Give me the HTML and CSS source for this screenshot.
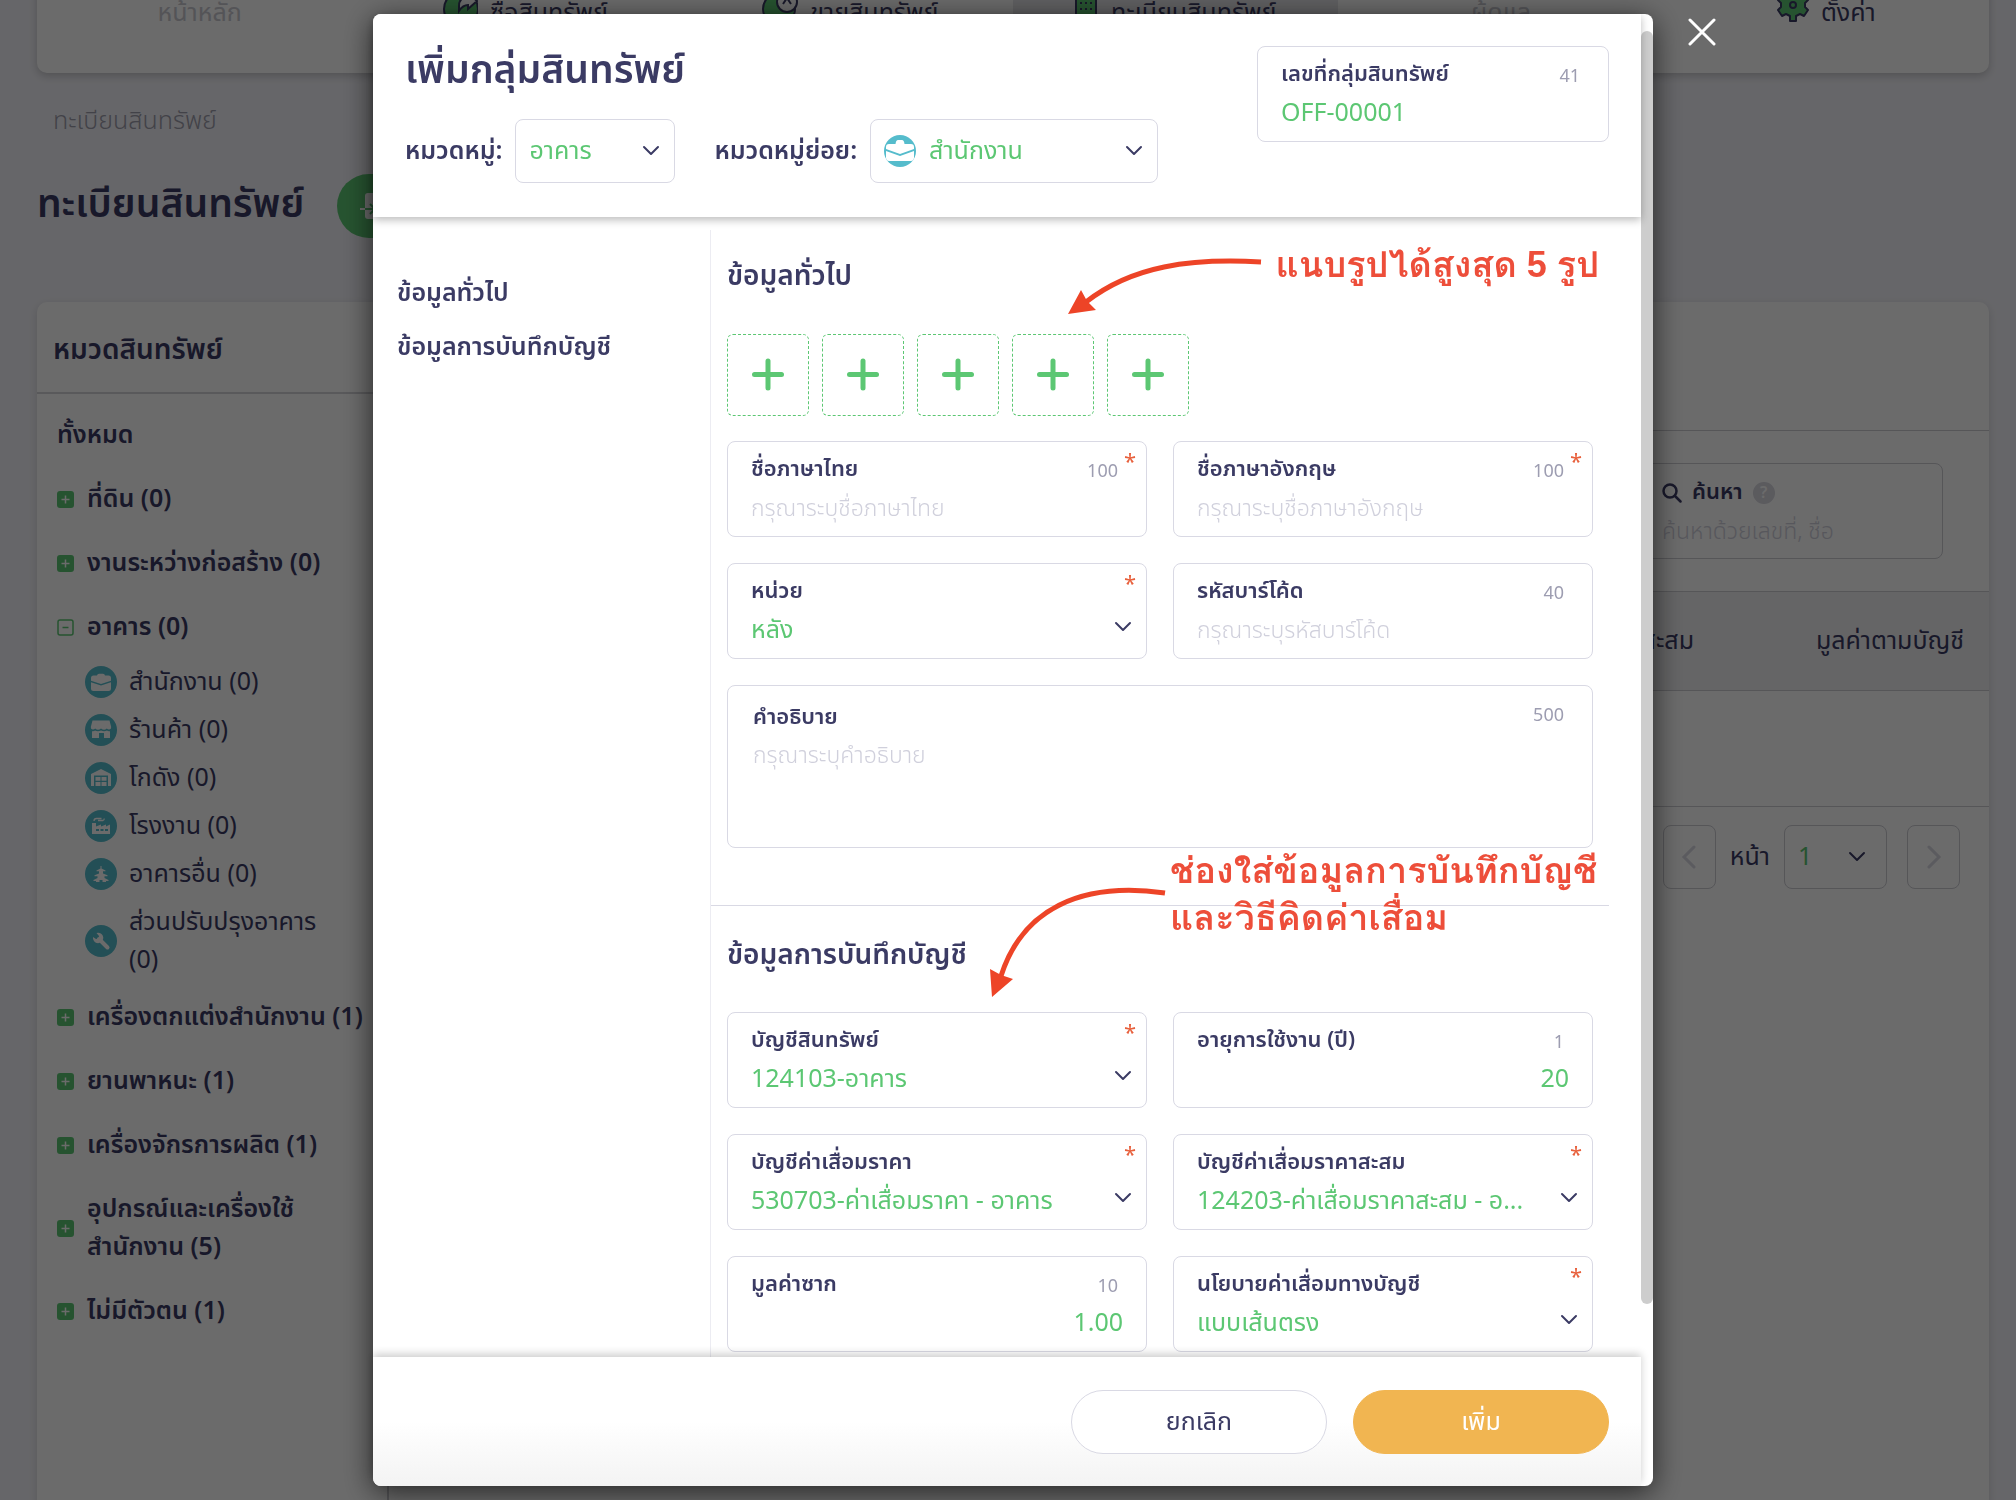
FILE: index.html
```html
<!DOCTYPE html>
<html lang="th">
<head>
<meta charset="utf-8">
<title>เพิ่มกลุ่มสินทรัพย์</title>
<link rel="stylesheet" href="styles.css">
</head>
<body>
<svg class="defs" aria-hidden="true">
  <symbol id="chev" viewBox="0 0 18 18"><path d="M2 5l7 7 7-7" fill="none" stroke="currentColor" stroke-width="2" stroke-linecap="round" stroke-linejoin="round"/></symbol>
  <symbol id="expand" viewBox="0 0 17 17"><rect width="17" height="17" rx="3" fill="#5cc773"/><path d="M8.500 4.500v8M4.500 8.500h8" stroke="#fff" stroke-width="1.500"/></symbol>
  <symbol id="collapse" viewBox="0 0 17 17"><rect x="1" y="1" width="15" height="15" rx="2" fill="none" stroke="#5cc773" stroke-width="1.500"/><path d="M5.500 8.500h6" stroke="#5cc773" stroke-width="1.500"/></symbol>
  <symbol id="office" viewBox="0 0 32 32"><circle cx="16" cy="16" r="16" fill="#55bccc"/><path d="M6 12q0-2.500 2.500-2.500h3.500q.3-1.800 2-1.800h4q1.700 0 2 1.800h3.500q2.500 0 2.500 2.500v2.700l-10 3.300-10-3.300zM6 16.300l10 3.300 10-3.300v6.200q0 2.500-2.500 2.500h-15q-2.500 0-2.500-2.500z" fill="#fff"/></symbol>
  <symbol id="office-line" viewBox="0 0 32 32"><circle cx="16" cy="16" r="16" fill="#55bccc"/><path d="M2 12q0-3 3-3h6.500q.5-4 2.500-4h4q2 0 2.500 4H27q3 0 3 3v2l-14 5-14-5zM2 16l14 5 14-5v7q-.5 3-3 3H5q-2.500 0-3-3z" fill="#fff"/></symbol>
  <symbol id="shop" viewBox="0 0 32 32"><circle cx="16" cy="16" r="16" fill="#55bccc"/><path d="M7.500 6.500h17l1.700 6.500q.2 2-1.800 2.500-1.400.3-2.600-1-1.300 1.300-2.800 1.300T16 14.500q-1.500 1.300-3 1.300t-2.800-1.300q-1.200 1.300-2.600 1-2-.5-1.800-2.500zM7 17.200q2 .3 3-.6 2.800 1.400 6 0 3.200 1.400 6 0 1 .9 3 .6v6.800h-6v-5h-5v5H7z" fill="#fff"/></symbol>
  <symbol id="warehouse" viewBox="0 0 32 32"><circle cx="16" cy="16" r="16" fill="#55bccc"/><path d="M6 12l10-5 10 5v12h-3V13.500H9V24H6z" fill="#fff"/><path d="M10.500 15h5v3.700h-5zM16.500 15h5v3.700h-5zM10.500 20h5v4h-5zM16.500 20h5v4h-5z" fill="#fff"/></symbol>
  <symbol id="factory" viewBox="0 0 32 32"><circle cx="16" cy="16" r="16" fill="#55bccc"/><path d="M7 13h4v3.500l5-2v2l5-2v2l4-2V24H7z" fill="#fff"/><path d="M9 11q0-2.500 2.500-2.500h5M13 10.500h5q1.500-.5 1-2" fill="none" stroke="#fff" stroke-width="1.300"/><path d="M11 19h3v2h-3zM15.500 19h3v2h-3zM20 19h3v2h-3z" fill="#55bccc"/></symbol>
  <symbol id="pagoda" viewBox="0 0 32 32"><circle cx="16" cy="16" r="16" fill="#55bccc"/><path d="M15.500 8h1v2.500l4 2v.8h-2.500v2.200l4.500 1.800v.9h-3v1.800l4 2v1H21v1h-3.500v-2h-3v2H11v-1H8.500v-1l4-2v-1.800h-3v-.9l4.500-1.800v-2.200h-2.500v-.8l4-2z" fill="#fff"/></symbol>
  <symbol id="wrench" viewBox="0 0 32 32"><circle cx="16" cy="16" r="16" fill="#55bccc"/><path d="M14 14l8.500 8.500" stroke="#fff" stroke-width="4" stroke-linecap="round"/><path d="M11.500 8a5.200 5.200 0 1 1-3.500 4l3 2 2.500-.5.500-2.500z" fill="#fff"/></symbol>
</svg>

<div class="page">
  <nav class="topnav">
    <a class="tab faded" href="#">หน้าหลัก</a>
    <a class="tab" href="#"><svg width="36" height="36" viewBox="0 0 36 36"><circle cx="19" cy="19" r="17" fill="#5cc773" stroke="#3b3b64" stroke-width="2"/><path d="M17 16q0-9 9-9V3l9 8-9 8v-4q-5 0-9 6z" fill="#fff" stroke="#3b3b64" stroke-width="2"/></svg>ซื้อสินทรัพย์</a>
    <a class="tab" href="#"><svg width="36" height="36" viewBox="0 0 36 36"><circle cx="17" cy="19" r="16" fill="#5cc773" stroke="#3b3b64" stroke-width="2"/><circle cx="25" cy="12" r="10" fill="#fff" stroke="#3b3b64" stroke-width="2"/><path d="M21 14l4-6 4 6" fill="none" stroke="#3b3b64" stroke-width="2"/></svg>ขายสินทรัพย์</a>
    <a class="tab current" href="#"><svg width="24" height="36" viewBox="0 0 24 36"><rect x="1" y="1" width="20" height="34" fill="#5cc773" stroke="#3b3b64" stroke-width="2"/><path d="M6 0v36M11 0v36M16 0v36" stroke="#3b3b64" stroke-width="2" stroke-dasharray="2 4"/></svg>ทะเบียนสินทรัพย์</a>
    <a class="tab faded" href="#">ผู้ดูแล</a>
    <a class="tab" href="#"><svg width="32" height="36" viewBox="0 0 32 36"><g fill="#5cc773" stroke="#3b3b64" stroke-width="2" stroke-linejoin="round"><path d="M13 0h6v5l4 2 4-3 4 6-3 3v4l3 3-4 6-4-2-4 2v5h-6v-5l-4-2-4 2-4-6 3-3v-4l-3-3 4-6 4 3 4-2z"/><circle cx="16" cy="15" r="3"/></g></svg>ตั้งค่า</a>
  </nav>
  <p class="crumb">ทะเบียนสินทรัพย์</p>
  <div class="heading">
    <h1>ทะเบียนสินทรัพย์</h1>
    <button class="import" type="button"><svg width="34" height="30" viewBox="0 0 34 30"><rect x="6" y="2" width="22" height="26" rx="3" fill="#fff"/><path d="M1 18h14M11 13l5 5-5 5" fill="none" stroke="#5cc773" stroke-width="2"/><path d="M1 18h5" stroke="#fff" stroke-width="2"/></svg>นำเข้า</button>
  </div>
  <div class="board">
    <aside class="cats">
      <h2>หมวดสินทรัพย์</h2>
      <ul class="tree">
        <li class="all">ทั้งหมด</li>
        <li><svg class="sq"><use href="#expand"/></svg>ที่ดิน (0)</li>
        <li><svg class="sq"><use href="#expand"/></svg>งานระหว่างก่อสร้าง (0)</li>
        <li><svg class="sq"><use href="#collapse"/></svg>อาคาร (0)</li>
      </ul>
      <ul class="sub">
        <li><svg><use href="#office"/></svg>สำนักงาน (0)</li>
        <li><svg><use href="#shop"/></svg>ร้านค้า (0)</li>
        <li><svg><use href="#warehouse"/></svg>โกดัง (0)</li>
        <li><svg><use href="#factory"/></svg>โรงงาน (0)</li>
        <li><svg><use href="#pagoda"/></svg>อาคารอื่น (0)</li>
        <li><svg><use href="#wrench"/></svg><span>ส่วนปรับปรุงอาคาร<br>(0)</span></li>
      </ul>
      <ul class="tree">
        <li><svg class="sq"><use href="#expand"/></svg>เครื่องตกแต่งสำนักงาน (1)</li>
        <li><svg class="sq"><use href="#expand"/></svg>ยานพาหนะ (1)</li>
        <li><svg class="sq"><use href="#expand"/></svg>เครื่องจักรการผลิต (1)</li>
        <li><svg class="sq"><use href="#expand"/></svg><span>อุปกรณ์และเครื่องใช้<br>สำนักงาน (5)</span></li>
        <li><svg class="sq"><use href="#expand"/></svg>ไม่มีตัวตน (1)</li>
      </ul>
    </aside>
    <section class="list">
      <div class="list-head"></div>
      <div class="toolbar">
        <div class="search">
          <label for="q"><svg width="20" height="20" viewBox="0 0 20 20"><g fill="none" stroke="#3b3b64" stroke-width="2.500" stroke-linecap="round"><circle cx="8" cy="8" r="6.500"/><path d="M13 13l5.500 5.500"/></g></svg>ค้นหา<span class="help">?</span></label>
          <input id="q" type="text" placeholder="ค้นหาด้วยเลขที่, ชื่อ">
        </div>
      </div>
      <table>
        <thead><tr><th>ค่าเสื่อมราคาสะสม</th><th class="last">มูลค่าตามบัญชี</th></tr></thead>
        <tbody><tr><td></td><td></td></tr></tbody>
      </table>
      <div class="pager">
        <button type="button" aria-label="ก่อนหน้า"><svg width="16" height="24" viewBox="0 0 16 24"><path d="M13 2L3 12l10 10" fill="none" stroke="#d8d8e2" stroke-width="3" stroke-linecap="round"/></svg></button>
        <label for="pg">หน้า</label>
        <span class="pick"><select id="pg"><option>1</option></select><svg class="chev"><use href="#chev"/></svg></span>
        <button class="next" type="button" aria-label="ถัดไป"><svg width="16" height="24" viewBox="0 0 16 24"><path d="M3 2l10 10L3 22" fill="none" stroke="#d8d8e2" stroke-width="3" stroke-linecap="round"/></svg></button>
      </div>
    </section>
  </div>
</div>

<div class="overlay">
  <div class="modal" role="dialog" aria-modal="true" aria-labelledby="title">
    <button class="close" type="button" aria-label="ปิด"><svg width="28" height="28" viewBox="0 0 28 28"><path d="M2 2l24 24M26 2L2 26" stroke="#fff" stroke-width="3" stroke-linecap="round"/></svg></button>
    <form class="sheet">
      <header class="head">
        <div>
          <h2 id="title">เพิ่มกลุ่มสินทรัพย์</h2>
          <div class="row">
            <label for="cat">หมวดหมู่:</label>
            <span class="pick cat"><select id="cat"><option>อาคาร</option></select><svg class="chev"><use href="#chev"/></svg></span>
            <label for="subcat">หมวดหมู่ย่อย:</label>
            <span class="pick subcat"><svg class="ico"><use href="#office-line"/></svg><select id="subcat"><option>สำนักงาน</option></select><svg class="chev"><use href="#chev"/></svg></span>
          </div>
        </div>
        <div class="field code"><label for="code">เลขที่กลุ่มสินทรัพย์</label><span class="count">41</span><input id="code" type="text" value="OFF-00001"></div>
      </header>
      <div class="body">
        <nav class="side">
          <a href="#general">ข้อมูลทั่วไป</a>
          <a href="#account">ข้อมูลการบันทึกบัญชี</a>
        </nav>
        <div class="content">
          <section id="general">
            <h3>ข้อมูลทั่วไป</h3>
            <div class="tiles">
              <button type="button" aria-label="เพิ่มรูป 1"></button><button type="button" aria-label="เพิ่มรูป 2"></button><button type="button" aria-label="เพิ่มรูป 3"></button><button type="button" aria-label="เพิ่มรูป 4"></button><button type="button" aria-label="เพิ่มรูป 5"></button>
            </div>
            <div class="fields">
              <div class="field"><label for="th">ชื่อภาษาไทย</label><span class="count">100</span><i class="req">*</i><input id="th" type="text" placeholder="กรุณาระบุชื่อภาษาไทย"></div>
              <div class="field"><label for="en">ชื่อภาษาอังกฤษ</label><span class="count">100</span><i class="req">*</i><input id="en" type="text" placeholder="กรุณาระบุชื่อภาษาอังกฤษ"></div>
              <div class="field"><label for="unit">หน่วย</label><i class="req">*</i><select id="unit"><option>หลัง</option></select><svg class="chev"><use href="#chev"/></svg></div>
              <div class="field"><label for="bar">รหัสบาร์โค้ด</label><span class="count">40</span><input id="bar" type="text" placeholder="กรุณาระบุรหัสบาร์โค้ด"></div>
              <div class="field wide"><label for="desc">คำอธิบาย</label><span class="count">500</span><textarea id="desc" placeholder="กรุณาระบุคำอธิบาย"></textarea></div>
            </div>
          </section>
          <section id="account">
            <h3>ข้อมูลการบันทึกบัญชี</h3>
            <div class="fields">
              <div class="field"><label for="a1">บัญชีสินทรัพย์</label><i class="req">*</i><select id="a1"><option>124103-อาคาร</option></select><svg class="chev"><use href="#chev"/></svg></div>
              <div class="field"><label for="a2">อายุการใช้งาน (ปี)</label><span class="count">1</span><input id="a2" class="num" type="text" value="20"></div>
              <div class="field"><label for="a3">บัญชีค่าเสื่อมราคา</label><i class="req">*</i><select id="a3"><option>530703-ค่าเสื่อมราคา - อาคาร</option></select><svg class="chev"><use href="#chev"/></svg></div>
              <div class="field"><label for="a4">บัญชีค่าเสื่อมราคาสะสม</label><i class="req">*</i><select id="a4"><option>124203-ค่าเสื่อมราคาสะสม - อ...</option></select><svg class="chev"><use href="#chev"/></svg></div>
              <div class="field"><label for="a5">มูลค่าซาก</label><span class="count">10</span><input id="a5" class="num" type="text" value="1.00"></div>
              <div class="field"><label for="a6">นโยบายค่าเสื่อมทางบัญชี</label><i class="req">*</i><select id="a6"><option>แบบเส้นตรง</option></select><svg class="chev"><use href="#chev"/></svg></div>
            </div>
          </section>
        </div>
        <svg class="arrows" aria-hidden="true"><g transform="translate(-373 -217)" fill="none" stroke="#ed4427" stroke-width="5"><path d="M1261 262C1190 258 1132 266 1086 302"/><path d="M1165 893C1080 881 1022 910 1001 976"/><g fill="#ed4427" stroke="none"><path d="M1068 314l13-24 6 11 9 9zM992 997l-2-28 11 6 12 4z"/></g></g></svg>
        <p class="note first">แนบรูปได้สูงสุด 5 รูป</p>
        <p class="note second">ช่องใส่ข้อมูลการบันทึกบัญชี<br>และวิธีคิดค่าเสื่อม</p>
      </div>
      <footer class="foot">
        <button type="button">ยกเลิก</button>
        <button class="primary" type="submit">เพิ่ม</button>
      </footer>
    </form>
    <div class="track"><div class="thumb"></div></div>
  </div>
</div>
</body>
</html>
```
FILE: styles.css
```css
:root {
  --ink: #3b3b64;
  --green: #5cc773;
  --line: #d9d9e4;
}
* { box-sizing: border-box; margin: 0; }
html, body { height: 100%; overflow: hidden; }
body, button, input, select, textarea {
  font-family: "Noto Sans Thai", "Noto Sans", sans-serif;
  font-size: 25px;
  font-weight: 400;
  line-height: 38px;
  color: var(--ink);
}
body { background: #f3f3f9; }
ul { list-style: none; padding: 0; }
a { color: inherit; text-decoration: none; }
button { cursor: pointer; }
.defs { position: absolute; width: 0; height: 0; }

.page { padding: 0 27px 0 37px; }
.topnav {
  display: grid;
  grid-template-columns: repeat(6, 1fr);
  height: 89px;
  margin-top: -16px;
  background: #fff;
  border-radius: 10px;
  box-shadow: 0 3px 8px #0003;
}
.tab { display: flex; justify-content: center; gap: 12px; padding-top: 10px; }
.tab svg { margin-top: -4px; }
.faded { color: #c8c8d0; }
.current { background: #e6e6ea; }
.crumb { margin: 29px 16px 0; color: #9d9dad; font-weight: 300; }
.heading { display: flex; align-items: center; gap: 33px; margin-top: 34px; height: 64px; }
h1, #title { font-size: 39px; font-weight: 600; line-height: 56px; }
.import {
  display: flex; align-items: center; gap: 12px;
  height: 64px; padding: 0 24px 0 22px;
  border: 0; border-radius: 32px;
  background: var(--green); color: #fff;
}
.board {
  display: grid;
  grid-template-columns: 352px 1fr;
  min-height: 1300px;
  margin-top: 64px;
  background: #fff;
  border-radius: 10px;
  box-shadow: 0 3px 8px #0002;
}
.cats { border-right: 2px solid #ccccd2; }
.cats h2 { padding: 30px 16px 22px; border-bottom: 2px solid #d3d3d8; font-size: 28px; font-weight: 600; line-height: 38px; }
.tree { padding: 22px 0 0 20px; font-size: 25px; font-weight: 600; white-space: nowrap; }
.sub + .tree { padding-top: 19px; }
.tree li { display: flex; align-items: center; gap: 13px; margin-bottom: 26px; }
.tree li:last-child { margin-bottom: 0; }
.sq { width: 17px; height: 17px; }
.sub { padding: 17px 0 0 48px; }
.sub li { display: flex; align-items: center; gap: 12px; margin-bottom: 10px; }
.sub li:last-child { margin-bottom: 0; }
.sub svg { width: 32px; height: 32px; }

.list-head { height: 129px; border-bottom: 1px solid #ccccd2; }
.toolbar { display: flex; justify-content: flex-end; padding: 32px 46px 32px 0; }
.search { width: 320px; height: 96px; padding: 10px 38px; border: 1px solid #ccccd2; border-radius: 8px; }
.search label { display: flex; align-items: center; gap: 10px; font-size: 22px; font-weight: 600; }
.help { width: 22px; height: 22px; border-radius: 50%; background: #d8d8e0; color: #fff; font-size: 16px; line-height: 22px; text-align: center; }
.search input { width: 100%; height: 38px; padding: 0; border: 0; background: none; }
table { width: 100%; border-collapse: collapse; border-top: 1px solid #ccccd2; }
th { height: 99px; padding-right: 25px; background: #f0f0f2; font-weight: 400; text-align: right; }
.last { width: 270px; }
td { height: 116px; border-top: 1px solid #ccccd2; border-bottom: 1px solid #ccccd2; }
.pager { display: flex; justify-content: flex-end; align-items: center; gap: 14px; padding: 18px 29px; }
.pager button { display: grid; place-items: center; width: 53px; height: 64px; padding: 0; border: 1px solid #ccccd2; border-radius: 8px; background: none; }
.pager .next { margin-left: 6px; }
.pager .pick { width: 103px; border-color: #ccccd2; }
.pager select { padding-left: 24px; }
.pager .chev { right: 20px; }

.overlay {
  position: fixed;
  inset: 0;
  display: flex;
  justify-content: center;
  padding: 14px 0 14px 10px;
  background: rgba(0, 0, 0, .58);
}
.modal {
  position: relative;
  display: flex;
  width: 1280px;
  max-width: 90%;
  background: #fff;
  border-radius: 8px;
  box-shadow: 0 6px 30px #000a;
}
.close { position: absolute; left: 100%; top: 4px; margin-left: 35px; padding: 0; border: 0; background: none; line-height: 0; }
.sheet { display: flex; flex-direction: column; flex: 1; min-width: 0; }
.track { flex: none; width: 12px; padding-top: 17px; }
.thumb { height: 1273px; max-height: 88%; border-radius: 6px; background: #cdcdcd; }
.head {
  position: relative;
  z-index: 1;
  display: flex;
  justify-content: space-between;
  align-items: flex-start;
  padding: 30px 32px 34px;
  background: #fff;
  border-radius: 8px 0 0 0;
  box-shadow: 0 3px 8px #0004;
}
#title { margin-bottom: 19px; }
.row { display: flex; align-items: center; gap: 13px; }
.row label { font-size: 25px; font-weight: 600; }
.row .cat { width: 160px; margin-right: 26px; }
.row .subcat { width: 288px; }
.pick { position: relative; display: flex; align-items: center; height: 64px; border: 1px solid var(--line); border-radius: 8px; }
select { appearance: none; width: 100%; height: 38px; padding: 0; border: 0; background: none; color: var(--green); }
.pick select { padding-left: 13px; }
.ico { flex: none; width: 32px; height: 32px; margin-left: 13px; }
.chev { position: absolute; right: 14px; width: 18px; height: 18px; color: var(--ink); pointer-events: none; }

.field {
  position: relative;
  height: 96px;
  padding: 9px 23px;
  border: 1px solid var(--line);
  border-radius: 8px;
}
.field label { display: block; font-size: 22px; font-weight: 600; }
.code { width: 352px; margin-top: 2px; }
.count { position: absolute; right: 28px; top: 11px; color: #9d9db1; font-size: 18px; }
.req { position: absolute; right: 10px; top: 2px; color: #e8603c; font-style: normal; font-size: 22px; }
.field input, textarea { display: block; width: 100%; height: 38px; padding: 0; border: 0; outline: 0; background: none; color: var(--green); resize: none; }
.field .num { text-align: right; }
::placeholder { color: #d0d0dc; opacity: 1; font-size: 23px; font-weight: 300; }
.field .chev { bottom: 22px; }

.body { position: relative; display: flex; flex: 1; min-height: 0; padding-top: 13px; overflow: hidden; }
.side { display: flex; flex: none; flex-direction: column; gap: 16px; width: 337px; padding: 44px 24px; font-size: 25px; font-weight: 600; }
.content { flex: 1; border-left: 1px solid #ececf2; }
.content section { padding: 28px 48px 57px 16px; }
#account { margin-right: 32px; padding-right: 16px; padding-top: 31px; border-top: 1px solid var(--line); }
h3 { font-size: 28px; font-weight: 600; line-height: 38px; }
.tiles { display: flex; gap: 13px; margin: 38px 0 25px; }
.tiles button { position: relative; width: 82px; height: 82px; border: 1px dashed var(--green); border-radius: 6px; background: none; }
.tiles button::before, .tiles button::after { content: ""; position: absolute; inset: 37px 24px 38px 24px; border-radius: 3px; background: var(--green); }
.tiles button::after { transform: rotate(90deg); }
.fields { display: grid; grid-template-columns: 1fr 1fr; gap: 26px; }
#account .fields { margin-top: 37px; }
.wide { grid-column: span 2; height: 163px; padding: 13px 25px; }
.wide textarea { height: 90px; }
.arrows { position: absolute; left: 0; top: 0; width: 100%; height: 100%; pointer-events: none; }
.note { position: absolute; color: #ed4e3a; font-family: "Liberation Sans", Loma, sans-serif; font-size: 36px; font-weight: 700; line-height: 47px; white-space: nowrap; }
.first { right: 42px; top: 24px; }
.second { left: 797px; top: 630px; }
.foot {
  display: flex;
  justify-content: flex-end;
  gap: 26px;
  position: relative;
  padding: 33px 32px 32px;
  background: linear-gradient(#fff 50%, #f3f3f3);
  border-radius: 0 0 0 8px;
  box-shadow: 0 -3px 8px #0003;
}
.foot button { width: 256px; height: 64px; border: 1px solid var(--line); border-radius: 32px; background: #fff; }
.foot .primary { border-color: #f1b551; background: #f1b551; color: #fff; }
```
